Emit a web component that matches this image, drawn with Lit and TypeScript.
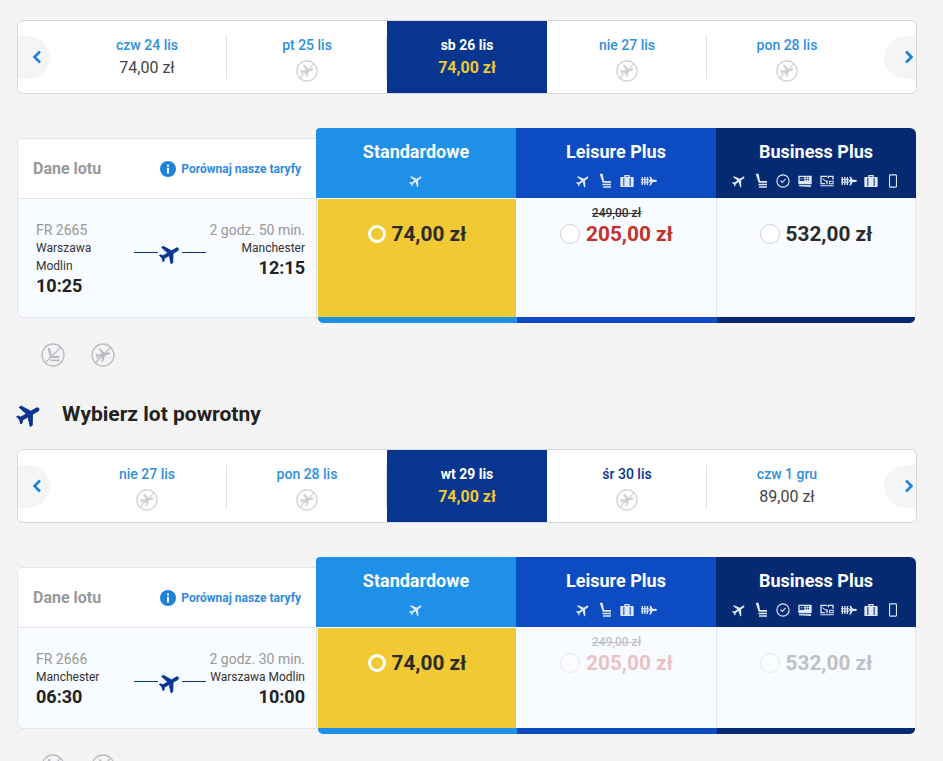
import { LitElement, html, css, svg } from "lit";
import { customElement } from "lit/decorators.js";

const PLANE = "M21 16v-2l-8-5V3.5c0-.83-.67-1.5-1.5-1.5S10 2.67 10 3.5V9l-8 5v2l8-2.5V19l-2 1.5V22l3.5-1 3.5 1v-1.5L13 19v-5.5l8 2.5z";

const plane = (cls: string, angle = 60) => html`<svg class=${cls} viewBox="0 0 24 24" fill="currentColor"><path transform="rotate(${angle} 12 12)" d=${PLANE} stroke="currentColor" stroke-width=".7"></path></svg>`;

const miniIcons: Record<string, unknown> = {
  plane: svg`<path transform="rotate(55 12 12)" d=${PLANE}></path>`,
  seat: svg`<path d="M4 1h4.400l2.200 11H21v2.800H8.500L4 1zM8 16.200h13v2.300H8zM9 19.800h12V22H9z"></path>`,
  clock: svg`<path fill-rule="evenodd" d="M12 2a10 10 0 1 0 0 20 10 10 0 0 0 0-20zm0 1.700a8.300 8.300 0 1 1 0 16.600 8.300 8.300 0 0 1 0-16.600z"></path><path d="M7.500 12l1.200-1.200 2.300 2.300 4.300-5 1.200 1.100-5.400 6.200z"></path>`,
  ticket: svg`<path fill-rule="evenodd" d="M2 4h20v13H2zm2 2v6h7V6zm9 0v2h2V6zm3 0v2h2V6zm-3 3v2h2V9zm3 0v2h2V9z"></path><path d="M3 18l18 .5V21l-18-1z"></path><path d="M5 7.500h5v1H5zM5 10h5v1H5z" fill-opacity=".6"></path>`,
  map: svg`<path fill-rule="evenodd" d="M2 4h10v2H4v9h5v2H2zM13 4h9v6h-2V6h-5v2h-2zM2 18.500h20V20H2zM11 11h2v6h-2zM15 11.500h7V17h-7zm1.500 1.500v2.500h4V13z"></path><path d="M6 8l6 5-1 1-6-5z"></path>`,
  queue: svg`<path d="M1 6h2v12H1zM4.800 6h2v12h-2zM8.600 6h2v12h-2z"></path><path d="M0 9.500h12v1.500H0zM0 13h12v1.500H0z"></path><path d="M12.500 5.500h2.200l3 4.500H22a1.800 1.800 0 0 1 0 3.600h-4.300l-3 5h-2.200l1.700-5h-2v-3.600h2z"></path>`,
  bag: svg`<path fill-rule="evenodd" d="M8 6V3h8v3h5a1 1 0 0 1 1 1v13a1 1 0 0 1-1 1H3a1 1 0 0 1-1-1V7a1 1 0 0 1 1-1zm1.800 0h4.400V4.800H9.800zM6.500 7.500v12h1.500v-12zm9.500 0v12h1.500v-12z"></path>`,
  phone: svg`<path fill-rule="evenodd" d="M8 2h8a2 2 0 0 1 2 2v16a2 2 0 0 1-2 2H8a2 2 0 0 1-2-2V4a2 2 0 0 1 2-2zm0 1.600a.5.5 0 0 0-.4.400v16a.5.5 0 0 0 .4.400h8a.5.5 0 0 0 .4-.4V4a.5.5 0 0 0-.4-.4z"></path>`,
};

const mini = (n: string) => html`<svg class="mini" viewBox="0 0 24 24" fill="currentColor">${miniIcons[n]}</svg>`;

const noFlight = (cls = "no") => html`<svg class=${cls} viewBox="0 0 24 24">
  <circle cx="12" cy="12" r="11" fill="none" stroke="currentColor" stroke-width="1.300"></circle>
  <path transform="translate(3.400 3.400) scale(.72) rotate(78 12 12)" fill="currentColor" d=${PLANE}></path>
  <path d="M4 20 20 4" stroke="currentColor" stroke-width="1.300"></path>
</svg>`;

const noSeat = () => html`<svg class="no" viewBox="0 0 24 24">
  <circle cx="12" cy="12" r="11" fill="none" stroke="currentColor" stroke-width="1.300"></circle>
  <path fill="currentColor" d="M6.500 5h2.600l1.700 8h7.700v2H9zM9.500 16.500H18.500v1.800H9.500z"></path>
  <path d="M4 20 20 4" stroke="currentColor" stroke-width="1.300"></path>
</svg>`;

type Day = { d: string; p?: string; sel?: boolean; dark?: boolean; sep?: boolean };
type Flight = {
  no: string; dur: string; from: string; to: string; dep: string; arr: string; dim?: boolean;
};

const FARES = [
  { t: "Standardowe", cls: "std", icons: ["plane"] },
  { t: "Leisure Plus", cls: "lei", icons: ["plane", "seat", "bag", "queue"] },
  { t: "Business Plus", cls: "bus", icons: ["plane", "seat", "clock", "ticket", "map", "queue", "bag", "phone"] },
];

@customElement("app-root")
export class AppRoot extends LitElement {
  static styles = css`
    :host { display: block; height: 761px; overflow: hidden; background: #f4f4f4; font-family: Roboto, "Liberation Sans", sans-serif; color: #222; }
    .page { padding: 20px 26px 0 17px; }
    .strip { display: flex; width: 900px; height: 74px; box-sizing: border-box; border: 1px solid #d6d8db; border-radius: 6px; background: #fff; overflow: hidden; align-items: stretch; }
    .nav { flex: none; align-self: center; width: 32px; height: 43px; background: #f3f5f7; color: #1f82d8; display: flex; align-items: center; }
    .nav svg { width: 12px; height: 16px; }
    .nav.l { border-radius: 0 22px 22px 0; margin-right: 17px; padding-left: 13px; box-sizing: border-box; }
    .nav.r { border-radius: 22px 0 0 22px; margin-left: 17px; padding-left: 19px; box-sizing: border-box; }
    .cell { position: relative; width: 160px; flex: none; box-sizing: border-box; padding-top: 15px; text-align: center; }
    .cell.sep::after { content: ""; position: absolute; right: 0; top: 15px; bottom: 14px; width: 1px; background: #dfe1e4; }
    .date { font-size: 14px; line-height: 18px; font-weight: 500; color: #2f90dc; }
    .cell.dark .date { color: #073590; }
    .cell .price { margin-top: 5px; font-size: 16px; line-height: 18px; color: #444; }
    .cell.sel { background: #073590; }
    .cell.sel .date { color: #fff; font-size: 14px; font-weight: 700; }
    .cell.sel .price { color: #f1c933; font-weight: 700; }
    .no { display: block; width: 22px; height: 22px; margin: 6px auto 0; color: #cfcfcf; }
    .table { display: flex; width: 899px; margin-top: 34px; align-items: stretch; }
    .left { flex: none; width: 300px; box-sizing: border-box; margin: 10px -1px 5px 0; border: 1px solid #e2e5e8; border-radius: 6px 0 0 6px; overflow: hidden; background: #f8fbff; }
    .lhead { height: 60px; box-sizing: border-box; background: #fff; border-bottom: 1px solid #e2e5e8; display: flex; align-items: center; justify-content: space-between; padding: 0 15px 0 15px; }
    .lhead b { font-size: 16px; font-weight: 700; color: #999; }
    .cmp { display: flex; align-items: center; gap: 5px; font-size: 12px; font-weight: 700; color: #2f8ae0; }
    .info { width: 16px; height: 16px; }
    .row { display: grid; grid-template-columns: 90px 72px 1fr; column-gap: 8px; padding: 22px 11px 20px 18px; }
    .no-txt { font-size: 14px; line-height: 18px; color: #999; }
    .city { font-size: 12px; line-height: 18px; color: #333; }
    .time { font-size: 18px; line-height: 22px; font-weight: 700; color: #222; }
    .arr { text-align: right; white-space: nowrap; margin-left: -8px; }
    .mid { display: flex; align-items: center; justify-content: space-between; height: 24px; margin-top: 21px; color: #073590; }
    .mid i { display: block; width: 24px; height: 1px; background: #073590; margin-top: -3px; }
    .plane { width: 24px; height: 24px; }
    .fares { flex: none; width: 600px; display: grid; grid-template-columns: repeat(3, 200px); }
    .fare { display: flex; flex-direction: column; }
    .fhead { height: 70px; box-sizing: border-box; padding-top: 12px; color: #fff; text-align: center; }
    .fhead h3 { margin: 0; font-size: 18px; line-height: 24px; font-weight: 700; }
    .minis { display: flex; justify-content: center; gap: 6px; margin-top: 9px; color: #dfe8f8; }
    .mini { width: 16px; height: 16px; display: block; }
    .std .fhead { background: #1f90e8; border-radius: 4px 0 0 0; }
    .lei .fhead { background: #0c4bc1; }
    .bus .fhead { background: #052a72; border-radius: 0 6px 0 0; }
    .fbody { flex: 1; background: #f8fbff; display: flex; flex-direction: column; box-sizing: border-box; }
    .std .fbody { margin-left: 2px; margin-right: -1px; }
    .lei .fbody { margin-left: 1px; margin-right: -1px; }
    .bus .fbody { margin-left: 1px; }
    .fcontent { flex: 1; padding-top: 8px; text-align: center; border-right: 1px solid #e2e5e8; }
    .std .fcontent { background: #f1c933; margin-top: 1px; padding-top: 7px; border-right-color: #f8fbff; }
    .old { height: 14px; font-size: 12px; line-height: 14px; font-weight: 500; color: #333; text-decoration: line-through; }
    .pr { display: flex; justify-content: center; align-items: center; gap: 6px; height: 24px; margin-top: 2px; font-size: 20.800px; font-weight: 700; color: #2b2b2b; }
    .radio { flex: none; width: 20px; height: 20px; box-sizing: border-box; border: 1px solid #cfd2d6; border-radius: 50%; background: #fff; }
    .std .radio { width: 18px; height: 18px; border: 3px solid #fff; background: transparent; }
    .lei .pr { color: #c4302b; }
    .bar { height: 6px; flex: none; }
    .std .bar { background: #1f90e8; border-radius: 0 0 0 5px; }
    .lei .bar { background: #0c4bc1; }
    .bus .bar { background: #052a72; border-radius: 0 0 5px 0; margin-right: 1px; }
    .faded .old, .faded .amount { opacity: .28; }
    .faded .radio { opacity: .4; }
    .extras { display: flex; gap: 26px; margin: 20px 0 0 24px; }
    .extras .no { margin: 0; width: 24px; height: 24px; color: #b9bcc2; }
    h2 { margin: 35px 0 22px; display: flex; align-items: center; gap: 19px; font-size: 21px; line-height: 25px; font-weight: 700; color: #222; }
    .hplane { width: 28px; height: 28px; margin: -2px 0 -2px -2px; color: #073590; }
  `;

  private chev(left: boolean) {
    return html`<svg viewBox="0 0 12 16" fill="none" stroke="currentColor" stroke-width="2.600"><path d=${left ? "M9 2.500 3.500 8 9 13.500" : "M3 2.500 8.500 8 3 13.500"}></path></svg>`;
  }

  private strip(days: Day[]) {
    return html`<div class="strip">
      <div class="nav l">${this.chev(true)}</div>
      ${days.map((x) => html`<div class="cell ${x.sel ? "sel" : ""} ${x.sep ? "sep" : ""} ${x.dark ? "dark" : ""}">
        <div class="date">${x.d}</div>
        ${x.p ? html`<div class="price">${x.p}</div>` : noFlight()}
      </div>`)}
      <div class="nav r">${this.chev(false)}</div>
    </div>`;
  }

  private table(f: Flight) {
    const prices = ["74,00 zł", "205,00 zł", "532,00 zł"];
    return html`<div class="table">
      <div class="left">
        <div class="lhead">
          <b>Dane lotu</b>
          <span class="cmp">
            <svg class="info" viewBox="0 0 16 16"><circle cx="8" cy="8" r="8" fill="#1f82d8"></circle><rect x="7" y="6.800" width="2" height="5.700" fill="#fff"></rect><rect x="7" y="3.500" width="2" height="2" fill="#fff"></rect></svg>
            Porównaj nasze taryfy
          </span>
        </div>
        <div class="row">
          <div>
            <div class="no-txt">${f.no}</div>
            <div class="city">${f.from}</div>
            <div class="time">${f.dep}</div>
          </div>
          <div class="mid"><i></i>${plane("plane")}<i></i></div>
          <div class="arr">
            <div class="no-txt">${f.dur}</div>
            <div class="city">${f.to}</div>
            <div class="time">${f.arr}</div>
          </div>
        </div>
      </div>
      <div class="fares">
        ${FARES.map((x, i) => html`<div class="fare ${x.cls} ${f.dim && i > 0 ? "faded" : ""}">
          <div class="fhead"><h3>${x.t}</h3><div class="minis">${x.icons.map(mini)}</div></div>
          <div class="fbody">
            <div class="fcontent">
              <div class="old">${i === 1 ? "249,00 zł" : ""}</div>
              <div class="pr">
                <span class="radio"></span>
                <span class="amount">${prices[i]}</span>
              </div>
            </div>
            <div class="bar"></div>
          </div>
        </div>`)}
      </div>
    </div>`;
  }

  private extras() {
    return html`<div class="extras">${noSeat()}${noFlight()}</div>`;
  }

  render() {
    return html`<div class="page">
      ${this.strip([
        { d: "czw 24 lis", p: "74,00 zł", sep: true },
        { d: "pt 25 lis", sep: true },
        { d: "sb 26 lis", p: "74,00 zł", sel: true },
        { d: "nie 27 lis", sep: true },
        { d: "pon 28 lis" },
      ])}
      ${this.table({ no: "FR 2665", dur: "2 godz. 50 min.", from: "Warszawa Modlin", to: "Manchester", dep: "10:25", arr: "12:15" })}
      ${this.extras()}
      <h2>${plane("hplane")}Wybierz lot powrotny</h2>
      ${this.strip([
        { d: "nie 27 lis", sep: true },
        { d: "pon 28 lis", sep: true },
        { d: "wt 29 lis", p: "74,00 zł", sel: true },
        { d: "śr 30 lis", dark: true, sep: true },
        { d: "czw 1 gru", p: "89,00 zł" },
      ])}
      ${this.table({ no: "FR 2666", dur: "2 godz. 30 min.", from: "Manchester", to: "Warszawa Modlin", dep: "06:30", arr: "10:00", dim: true })}
      ${this.extras()}
    </div>`;
  }
}
